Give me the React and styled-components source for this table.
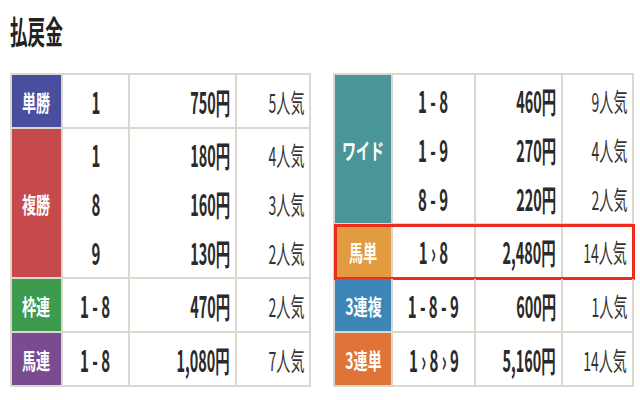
import React from "react";
import styled, { createGlobalStyle } from "styled-components";

const Global = createGlobalStyle`
  html, body { margin: 0; padding: 0; background: #ffffff; }
  body { font-family: "Noto Sans CJK JP", "Noto Sans", sans-serif; color: #222; }
`;

const Page = styled.div`
  width: 640px;
  height: 400px;
  padding: 13px 0 0 10px;
  box-sizing: border-box;
  overflow: hidden;
`;

const Title = styled.h1`
  margin: 0 0 26px 0;
  height: 34px;
  line-height: 34px;
  font-size: 32px;
  font-weight: 700;
  color: #222;
`;

const Squeeze = styled.span`
  display: inline-block;
  white-space: nowrap;
  transform: scaleX(${(p) => p.$s});
  transform-origin: ${(p) => p.$origin || "center"} center;
`;

const Tables = styled.div`
  display: flex;
  gap: 22px;
  align-items: flex-start;
`;

const Table = styled.div`
  width: 301px;
  border-top: 2px solid #dbd8d0;
  border-left: 2px solid #dbd8d0;
  box-sizing: border-box;
`;

const Group = styled.div`
  display: grid;
  grid-template-columns: ${(p) => p.$cols};
  outline: ${(p) => (p.$highlight ? "3px solid #ee2b1c" : "none")};
  outline-offset: -2px;
  position: relative;
`;

const Cell = styled.div`
  border-right: 2px solid #dbd8d0;
  border-bottom: 2px solid #dbd8d0;
  display: flex;
  flex-direction: column;
  justify-content: center;
  min-height: ${(p) => (p.$lines > 1 ? 148 : 52)}px;
`;

const LabelCell = styled(Cell)`
  background: ${(p) => p.$bg};
  align-items: center;
  color: #fff;
  font-size: 22px;
  font-weight: 700;
`;

const Line = styled.div`
  height: ${(p) => (p.$lines > 1 ? 49 : 52)}px;
  display: flex;
  align-items: center;
  justify-content: ${(p) => p.$align};
  padding: 0 ${(p) => (p.$align === "flex-end" ? 5 : 0)}px 0 0;
  font-size: ${(p) => p.$size}px;
  font-weight: ${(p) => p.$weight};
  color: ${(p) => p.$color};
`;

const left = {
  cols: "51px 67px 107px 74px",
  groups: [
    { label: "単勝", color: "#4a4e9f", rows: [["1", "750円", "5人気"]] },
    {
      label: "複勝",
      color: "#c64a4b",
      rows: [
        ["1", "180円", "4人気"],
        ["8", "160円", "3人気"],
        ["9", "130円", "2人気"],
      ],
    },
    { label: "枠連", color: "#3e9a4f", rows: [["1 - 8", "470円", "2人気"]] },
    { label: "馬連", color: "#7a4b91", rows: [["1 - 8", "1,080円", "7人気"]] },
  ],
};

const right = {
  cols: "58px 83px 87px 71px",
  groups: [
    {
      label: "ワイド",
      color: "#4a9598",
      rows: [
        ["1 - 8", "460円", "9人気"],
        ["1 - 9", "270円", "4人気"],
        ["8 - 9", "220円", "2人気"],
      ],
    },
    { label: "馬単", color: "#e39b3f", rows: [["1 › 8", "2,480円", "14人気"]], highlight: true },
    { label: "3連複", color: "#3b86b6", rows: [["1 - 8 - 9", "600円", "1人気"]] },
    { label: "3連単", color: "#e07337", rows: [["1 › 8 › 9", "5,160円", "14人気"]] },
  ],
};

const colStyle = [
  { align: "center", origin: "center", size: 30, weight: 700, color: "#2a2a2a", s: 0.5 },
  { align: "flex-end", origin: "right", size: 30, weight: 700, color: "#2a2a2a", s: 0.48 },
  { align: "flex-end", origin: "right", size: 26, weight: 400, color: "#333", s: 0.54 },
];

function PayTable({ data }) {
  return (
    <Table>
      {data.groups.map((g) => {
        const n = g.rows.length;
        return (
          <Group key={g.label} $cols={data.cols} $highlight={g.highlight}>
            <LabelCell $bg={g.color} $lines={n}>
              <Squeeze $s={0.64}>{g.label}</Squeeze>
            </LabelCell>
            {colStyle.map((c, ci) => (
              <Cell key={ci} $lines={n}>
                {g.rows.map((r, ri) => (
                  <Line
                    key={ri}
                    $lines={n}
                    $align={c.align}
                    $size={c.size}
                    $weight={c.weight}
                    $color={c.color}
                  >
                    <Squeeze $s={c.s} $origin={c.origin}>
                      {r[ci]}
                    </Squeeze>
                  </Line>
                ))}
              </Cell>
            ))}
          </Group>
        );
      })}
    </Table>
  );
}

export default function App() {
  return (
    <>
      <Global />
      <Page>
        <Title>
          <Squeeze $s={0.55} $origin="left">払戻金</Squeeze>
        </Title>
        <Tables>
          <PayTable data={left} />
          <PayTable data={right} />
        </Tables>
      </Page>
    </>
  );
}
